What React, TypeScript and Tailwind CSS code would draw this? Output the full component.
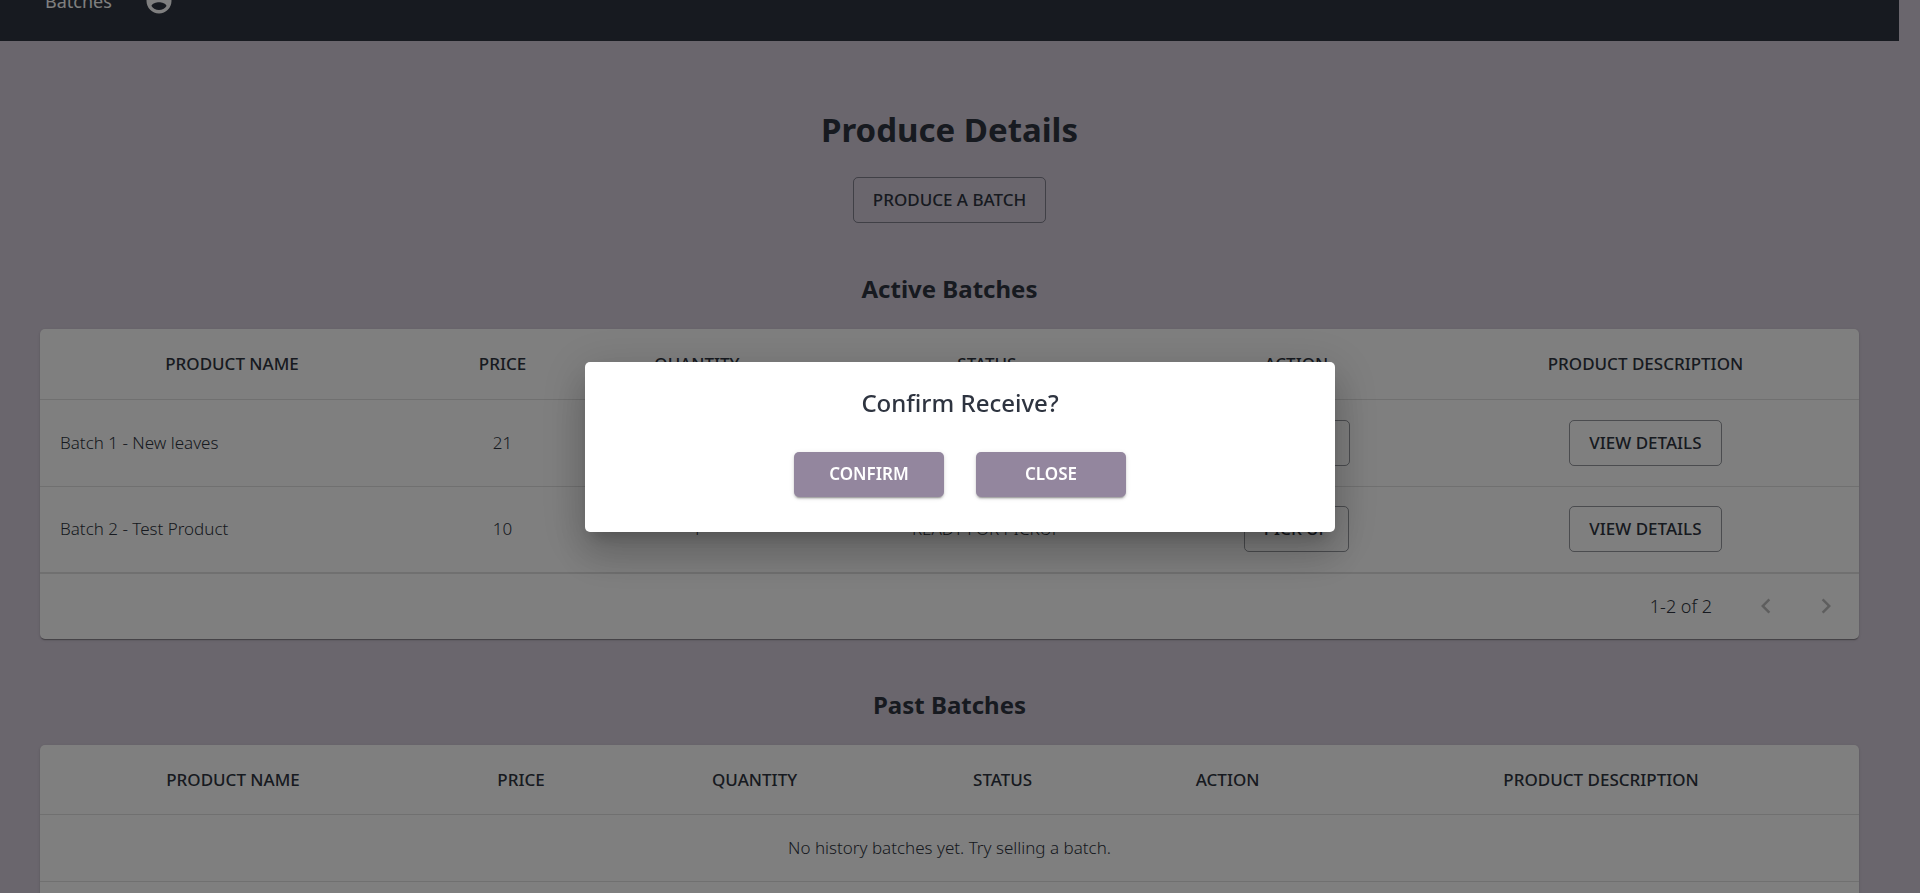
import type { ReactNode } from "react";

const HEADINGS = ["PRODUCT NAME", "PRICE", "QUANTITY", "STATUS", "ACTION", "PRODUCT DESCRIPTION"];

const activeBatches = [
  { name: "Batch 1 - New leaves", price: 21, quantity: 1, status: "SHIPPED", action: "RECEIVE" },
  { name: "Batch 2 - Test Product", price: 10, quantity: 1, status: "READY FOR PICKUP", action: "PICK UP" },
];

function OutlinedButton({ children }: { children: ReactNode }) {
  return (
    <button
      type="button"
      className="h-[46px] rounded-[5px] border border-current/50 px-[19px] text-[17px] font-medium whitespace-nowrap"
    >
      {children}
    </button>
  );
}

function ContainedButton({ children }: { children: ReactNode }) {
  return (
    <button
      type="button"
      className="h-[45px] w-[150px] rounded-[5px] bg-[#93869e] text-[17px] font-semibold text-white shadow-[0_3px_1px_-2px_rgba(0,0,0,0.2),0_2px_2px_0_rgba(0,0,0,0.14),0_1px_5px_0_rgba(0,0,0,0.12)]"
    >
      {children}
    </button>
  );
}

function Chevron({ d, label }: { d: string; label: string }) {
  return (
    <button type="button" aria-label={label} disabled className="flex size-[60px] items-center justify-center text-black/26">
      <svg viewBox="0 0 24 24" className="size-[30px] fill-current" aria-hidden="true">
        <path d={d} />
      </svg>
    </button>
  );
}

function Pagination({ range }: { range: string }) {
  return (
    <div className="flex h-[66px] items-center justify-end border-t border-[#e0e0e0] pr-[3px]">
      <span className="mr-6 text-[18px] font-light">{range}</span>
      <Chevron label="Previous page" d="M15.41 7.41L14 6l-6 6 6 6 1.41-1.41L10.83 12z" />
      <Chevron label="Next page" d="M10 6L8.59 7.41 13.17 12l-4.58 4.59L10 18l6-6z" />
    </div>
  );
}

function Section({ title, columns, range, children }: { title: string; columns: ReactNode; range: string; children: ReactNode }) {
  return (
    <section className="mt-[48px]">
      <h2 className="mb-[22px] text-center text-[24px] leading-9 font-bold">{title}</h2>
      <div className="rounded-[5px] bg-white shadow-[0_2px_1px_-1px_rgba(0,0,0,0.2),0_1px_1px_0_rgba(0,0,0,0.14),0_1px_3px_0_rgba(0,0,0,0.12)]">
        <table className="w-full table-fixed text-center text-[17px]">
          <colgroup>{columns}</colgroup>
          <thead>
            <tr className="h-[70px] border-b border-[#e0e0e0]">
              {HEADINGS.map((heading) => (
                <th key={heading} scope="col" className="font-medium">
                  {heading}
                </th>
              ))}
            </tr>
          </thead>
          <tbody className="text-[17px] font-light">{children}</tbody>
        </table>
        <Pagination range={range} />
      </div>
    </section>
  );
}

export default function App() {
  return (
    <div className="h-screen overflow-hidden bg-[#d4ccda] pr-[21px] font-['Noto_Sans','Open_Sans',sans-serif] text-[#2e3440]">
      <nav className="-mt-[39px] flex h-20 items-center gap-8 bg-[#2e3440] px-[45px] text-white">
        <a href="#batches" className="text-[18px]">
          Batches
        </a>
        <button type="button" aria-label="Account">
          <svg viewBox="0 0 24 24" className="size-[30px] fill-current" aria-hidden="true">
            <path d="M12 2C6.48 2 2 6.48 2 12s4.48 10 10 10 10-4.48 10-10S17.52 2 12 2zm0 3c1.66 0 3 1.34 3 3s-1.34 3-3 3-3-1.34-3-3 1.34-3 3-3zm0 14.2c-2.5 0-4.71-1.28-6-3.22.03-1.99 4-3.08 6-3.08 1.99 0 5.97 1.09 6 3.08-1.29 1.94-3.5 3.22-6 3.22z" />
          </svg>
        </button>
      </nav>

      <main className="px-10 pt-[62px]">
        <h1 className="mb-5 text-center text-[33px] leading-[54px] font-bold">Produce Details</h1>
        <div className="flex justify-center">
          <OutlinedButton>PRODUCE A BATCH</OutlinedButton>
        </div>

        <Section
          title="Active Batches"
          range="1-2 of 2"
          columns={
            <>
              <col className="w-[21.11%]" />
              <col className="w-[8.63%]" />
              <col className="w-[12.75%]" />
              <col className="w-[19.13%]" />
              <col className="w-[14.9%]" />
              <col />
            </>
          }
        >
          {activeBatches.map((batch) => (
            <tr key={batch.name} className="h-[87px] border-b border-[#e0e0e0] last:h-[86px]">
              <td className="px-5 text-left">{batch.name}</td>
              <td>{batch.price}</td>
              <td>{batch.quantity}</td>
              <td>{batch.status}</td>
              <td>
                <OutlinedButton>{batch.action}</OutlinedButton>
              </td>
              <td>
                <OutlinedButton>VIEW DETAILS</OutlinedButton>
              </td>
            </tr>
          ))}
        </Section>

        <Section
          title="Past Batches"
          range="0-0 of 0"
          columns={
            <>
              <col className="w-[21.22%]" />
              <col className="w-[10.45%]" />
              <col className="w-[15.23%]" />
              <col className="w-[12.04%]" />
              <col className="w-[12.7%]" />
              <col />
            </>
          }
        >
          <tr className="h-[66px]">
            <td colSpan={6}>No history batches yet. Try selling a batch.</td>
          </tr>
        </Section>
      </main>

      <div className="fixed inset-0 flex items-center justify-center bg-black/50">
        <div
          role="dialog"
          aria-modal="true"
          aria-labelledby="confirm-title"
          className="w-[750px] rounded-[5px] bg-white px-8 pt-[23px] pb-[35px] text-center shadow-[0_11px_15px_-7px_rgba(0,0,0,0.2),0_24px_38px_3px_rgba(0,0,0,0.14),0_9px_46px_8px_rgba(0,0,0,0.12)]"
        >
          <h2 id="confirm-title" className="mb-[31px] text-[24px] leading-9 font-medium">
            Confirm Receive?
          </h2>
          <div className="flex justify-center gap-8">
            <ContainedButton>CONFIRM</ContainedButton>
            <ContainedButton>CLOSE</ContainedButton>
          </div>
        </div>
      </div>
    </div>
  );
}
